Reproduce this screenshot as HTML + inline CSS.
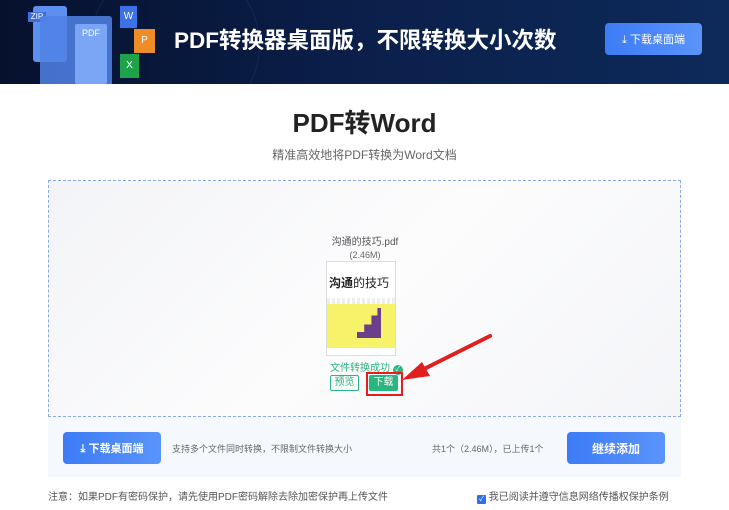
<!DOCTYPE html>
<html><head><meta charset="utf-8"><style>
*{margin:0;padding:0;box-sizing:border-box}
body{width:729px;height:510px;overflow:hidden;background:#fff;font-family:"Liberation Sans","Noto Sans CJK SC",sans-serif;position:relative}
.hdr{position:absolute;left:0;top:0;width:729px;height:84px;background:linear-gradient(90deg,#06112e 0%,#0b1f4a 50%,#0d2a5a 100%);overflow:hidden}
.abs{position:absolute}
.btn{position:absolute;background:linear-gradient(90deg,#3d7cf6,#5a93fb);color:#fff;border-radius:4px;font-size:11px;display:flex;align-items:center;justify-content:center}
</style></head><body>
<div class="hdr">
 <div class="abs" style="left:90px;top:-40px;width:170px;height:170px;border-radius:50%;border:1px solid rgba(80,120,200,.15)"></div>
 <div class="abs" style="left:33px;top:6px;width:34px;height:56px;background:#5d8ff0;border-radius:3px"></div>
 <div class="abs" style="left:28px;top:12px;width:18px;height:10px;background:#3e6fd8;color:#fff;font-size:8px;line-height:10px;text-align:center">ZIP</div>
 <div class="abs" style="left:40px;top:16px;width:72px;height:78px;background:rgba(80,130,230,.85);border-radius:3px"></div>
 <div class="abs" style="left:75px;top:24px;width:32px;height:60px;background:#7aa6f5;border-radius:2px;color:#fff;font-size:9px;text-align:center;padding-top:4px">PDF</div>
 <div class="abs" style="left:120px;top:6px;width:17px;height:22px;background:#3b72e6;color:#fff;font-size:10px;text-align:center;line-height:22px">W</div>
 <div class="abs" style="left:134px;top:29px;width:21px;height:24px;background:#f08c28;color:#fff;font-size:10px;text-align:center;line-height:24px">P</div>
 <div class="abs" style="left:120px;top:54px;width:19px;height:24px;background:#1ea34a;color:#fff;font-size:10px;text-align:center;line-height:24px">X</div>
 <div class="abs" style="left:174px;top:26px;color:#fff;font-size:22.5px;font-weight:bold;line-height:30px;white-space:nowrap">PDF转换器桌面版，不限转换大小次数</div>
 <div class="btn" style="left:605px;top:23px;width:97px;height:32px">⤓&nbsp;下载桌面端</div>
</div>
<div class="abs" style="left:0;width:729px;top:103px;text-align:center;font-size:26px;font-weight:bold;color:#222">PDF转Word</div>
<div class="abs" style="left:0;width:729px;top:146px;text-align:center;font-size:12px;color:#666">精准高效地将PDF转换为Word文档</div>
<div class="abs" style="left:48px;top:180px;width:633px;height:237px;border:1px dashed #8aaae6;background:linear-gradient(135deg,#f3f4f7,#fcfcfd 50%,#f4f5f8)"></div>
<div class="abs" style="left:300px;width:130px;top:233px;text-align:center;font-size:10px;color:#555">沟通的技巧.pdf</div>
<div class="abs" style="left:300px;width:130px;top:250px;text-align:center;font-size:9px;color:#666">(2.46M)</div>
<div class="abs" style="left:326px;top:261px;width:70px;height:95px;background:#fff;border:1px solid #ddd">
 <div class="abs" style="left:2px;top:12px;font-size:12px;font-weight:bold;color:#222">沟通<span style="font-weight:normal">的技巧</span></div>
 <div class="abs" style="left:0;top:36px;width:68px;height:6px;background:repeating-linear-gradient(90deg,#eee 0 3px,#fff 3px 5px)"></div>
 <div class="abs" style="left:0;top:42px;width:68px;height:44px;background:#f6f26a"></div>
 <div class="abs" style="left:30px;top:46px;width:24px;height:30px;background:#6b3f8a;clip-path:polygon(100% 0,100% 100%,0 100%,0 80%,30% 80%,30% 55%,60% 55%,60% 25%,85% 25%,85% 0)"></div>
</div>
<div class="abs" style="left:330px;top:359px;font-size:10px;color:#2bb57f">文件转换成功 <span style="display:inline-block;width:10px;height:10px;border-radius:50%;background:#2bb57f;color:#fff;font-size:7px;line-height:10px;text-align:center">✓</span></div>
<div class="abs" style="left:330px;top:375px;width:29px;height:16px;border:1px solid #2bb57f;border-radius:2px;color:#2bb57f;font-size:10px;text-align:center;line-height:14px">预览</div>
<div class="abs" style="left:366px;top:372px;width:37px;height:24px;border:2px solid #e02020"></div>
<div class="abs" style="left:369px;top:375px;width:29px;height:16px;background:#2bb57f;border-radius:2px;color:#fff;font-size:10px;text-align:center;line-height:16px">下载</div>
<svg class="abs" style="left:400px;top:332px" width="95" height="50"><line x1="90" y1="4" x2="14" y2="42" stroke="#e02020" stroke-width="4" stroke-linecap="round"/><polygon points="2,48 22,30 30,44" fill="#e02020"/></svg>
<div class="abs" style="left:48px;top:417px;width:633px;height:60px;background:#f5f8fd"></div>
<div class="btn" style="left:63px;top:432px;width:98px;height:32px;font-weight:bold">⤓&nbsp;下载桌面端</div>
<div class="abs" style="left:172px;top:442px;font-size:9px;color:#666">支持多个文件同时转换，不限制文件转换大小</div>
<div class="abs" style="left:432px;top:442px;font-size:9px;color:#666">共1个（2.46M），已上传1个</div>
<div class="btn" style="left:567px;top:432px;width:98px;height:32px;font-size:12px;font-weight:bold">继续添加</div>
<div class="abs" style="left:48px;top:488px;font-size:10px;color:#555">注意：如果PDF有密码保护，请先使用PDF密码解除去除加密保护再上传文件</div>
<div class="abs" style="left:477px;top:488px;font-size:10px;color:#555;white-space:nowrap"><span style="display:inline-block;width:9px;height:9px;background:#2f6fe8;border-radius:1px;color:#fff;font-size:7px;line-height:9px;text-align:center;vertical-align:-1px">✓</span> 我已阅读并遵守信息网络传播权保护条例</div>
</body></html>
